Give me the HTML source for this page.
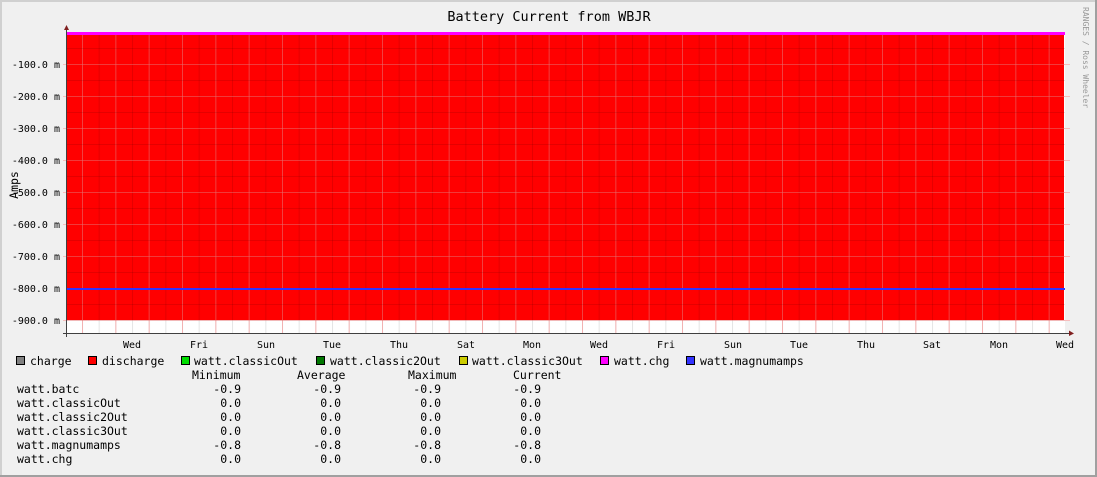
<!DOCTYPE html>
<html><head><meta charset="utf-8"><style>
html,body{margin:0;padding:0;background:#f0f0f0;}
svg{display:block;}
text{font-family:"DejaVu Sans Mono","Liberation Mono",monospace;font-size:10px;fill:#000;}
.l{font-size:11.5px;}
</style></head><body>
<svg width="1097" height="477" viewBox="0 0 1097 477" xmlns="http://www.w3.org/2000/svg">
<defs>
<pattern id="vmin" x="82" y="0" width="16.667" height="477" patternUnits="userSpaceOnUse">
<rect x="0" y="0" width="1" height="477" fill="#000" fill-opacity="0.1"/>
</pattern>
<pattern id="vmaj" x="82" y="0" width="33.333" height="477" patternUnits="userSpaceOnUse">
<rect x="0" y="0" width="1" height="477" fill="#ff8080" fill-opacity="0.5"/>
</pattern>
<pattern id="hmin" x="0" y="32" width="1097" height="16" patternUnits="userSpaceOnUse">
<rect x="0" y="0" width="1097" height="1" fill="#000" fill-opacity="0.1"/>
</pattern>
</defs>
<rect x="0" y="0" width="1097" height="477" fill="#f0f0f0"/>
<rect x="0" y="0" width="1097" height="2" fill="#d0d0d0"/>
<rect x="0" y="0" width="2" height="477" fill="#d0d0d0"/>
<rect x="1095" y="0" width="2" height="477" fill="#a0a0a0"/>
<rect x="0" y="475" width="1097" height="2" fill="#a0a0a0"/>
<text x="549" y="21" text-anchor="middle" style="font-size:13.5px">Battery Current from WBJR</text>
<text transform="translate(1083,7) rotate(90)" style="font-size:8px;fill:#999">RANGES / Ross Wheeler</text>
<text transform="translate(18,185) rotate(-90)" text-anchor="middle" class="l">Amps</text>
<!-- plot -->
<rect x="67" y="32" width="998" height="301" fill="#fff"/>
<rect x="67" y="32" width="997" height="288" fill="#ff0000"/>
<rect x="67" y="32" width="998" height="301" fill="url(#vmin)"/>
<rect x="67" y="32" width="998" height="301" fill="url(#vmaj)"/>
<rect x="67" y="32" width="998" height="289" fill="url(#hmin)"/>
<g fill="#ff8080" fill-opacity="0.45">
<rect x="63" y="64" width="1007" height="1"/><rect x="63" y="96" width="1007" height="1"/>
<rect x="63" y="128" width="1007" height="1"/><rect x="63" y="160" width="1007" height="1"/>
<rect x="63" y="192" width="1007" height="1"/><rect x="63" y="224" width="1007" height="1"/>
<rect x="63" y="256" width="1007" height="1"/><rect x="63" y="320" width="1007" height="1"/>
</g>
<rect x="67" y="32" width="998" height="3" fill="#ff00ff"/>
<rect x="67" y="288" width="998" height="2" fill="#3333ff"/>
<!-- axes -->
<rect x="66" y="30" width="1" height="307" fill="#404040"/>
<rect x="63" y="333" width="1008" height="1" fill="#404040"/>
<polygon points="64,30 69,30 66.5,25" fill="#802020"/>
<polygon points="1069,330.5 1069,336 1074,333.5" fill="#802020"/>
<g text-anchor="end">
<text x="60" y="68">-100.0 m</text><text x="60" y="100">-200.0 m</text>
<text x="60" y="132">-300.0 m</text><text x="60" y="164">-400.0 m</text>
<text x="60" y="196">-500.0 m</text><text x="60" y="228">-600.0 m</text>
<text x="60" y="260">-700.0 m</text><text x="60" y="292">-800.0 m</text>
<text x="60" y="324">-900.0 m</text>
</g>
<g text-anchor="middle">
<text x="132" y="348">Wed</text><text x="199" y="348">Fri</text><text x="266" y="348">Sun</text>
<text x="332" y="348">Tue</text><text x="399" y="348">Thu</text><text x="466" y="348">Sat</text>
<text x="532" y="348">Mon</text><text x="599" y="348">Wed</text><text x="666" y="348">Fri</text>
<text x="733" y="348">Sun</text><text x="799" y="348">Tue</text><text x="866" y="348">Thu</text>
<text x="932" y="348">Sat</text><text x="999" y="348">Mon</text><text x="1065" y="348">Wed</text>
</g>
<!-- legend -->
<g stroke="#000" stroke-width="1">
<rect x="16.5" y="356.5" width="8" height="8" fill="#808080"/>
<rect x="88.5" y="356.5" width="8" height="8" fill="#ff0000"/>
<rect x="181.5" y="356.5" width="8" height="8" fill="#00dd00"/>
<rect x="316.5" y="356.5" width="8" height="8" fill="#007700"/>
<rect x="459.5" y="356.5" width="8" height="8" fill="#cccc00"/>
<rect x="600.5" y="356.5" width="8" height="8" fill="#ff00ff"/>
<rect x="686.5" y="356.5" width="8" height="8" fill="#3333ff"/>
</g>
<g class="l">
<text class="l" x="30" y="365">charge</text>
<text class="l" x="102" y="365">discharge</text>
<text class="l" x="194" y="365">watt.classicOut</text>
<text class="l" x="330" y="365">watt.classic2Out</text>
<text class="l" x="472" y="365">watt.classic3Out</text>
<text class="l" x="614" y="365">watt.chg</text>
<text class="l" x="700" y="365">watt.magnumamps</text>
<text class="l" x="192" y="379">Minimum</text><text class="l" x="297" y="379">Average</text>
<text class="l" x="408" y="379">Maximum</text><text class="l" x="513" y="379">Current</text>
<text class="l" x="17" y="393">watt.batc</text><text class="l" x="17" y="407">watt.classicOut</text>
<text class="l" x="17" y="421">watt.classic2Out</text><text class="l" x="17" y="435">watt.classic3Out</text>
<text class="l" x="17" y="449">watt.magnumamps</text><text class="l" x="17" y="463">watt.chg</text>
</g>
<g text-anchor="end">
<text class="l" x="241" y="393">-0.9</text><text class="l" x="341" y="393">-0.9</text><text class="l" x="441" y="393">-0.9</text><text class="l" x="541" y="393">-0.9</text>
<text class="l" x="241" y="407">0.0</text><text class="l" x="341" y="407">0.0</text><text class="l" x="441" y="407">0.0</text><text class="l" x="541" y="407">0.0</text>
<text class="l" x="241" y="421">0.0</text><text class="l" x="341" y="421">0.0</text><text class="l" x="441" y="421">0.0</text><text class="l" x="541" y="421">0.0</text>
<text class="l" x="241" y="435">0.0</text><text class="l" x="341" y="435">0.0</text><text class="l" x="441" y="435">0.0</text><text class="l" x="541" y="435">0.0</text>
<text class="l" x="241" y="449">-0.8</text><text class="l" x="341" y="449">-0.8</text><text class="l" x="441" y="449">-0.8</text><text class="l" x="541" y="449">-0.8</text>
<text class="l" x="241" y="463">0.0</text><text class="l" x="341" y="463">0.0</text><text class="l" x="441" y="463">0.0</text><text class="l" x="541" y="463">0.0</text>
</g>
</svg>
</body></html>
